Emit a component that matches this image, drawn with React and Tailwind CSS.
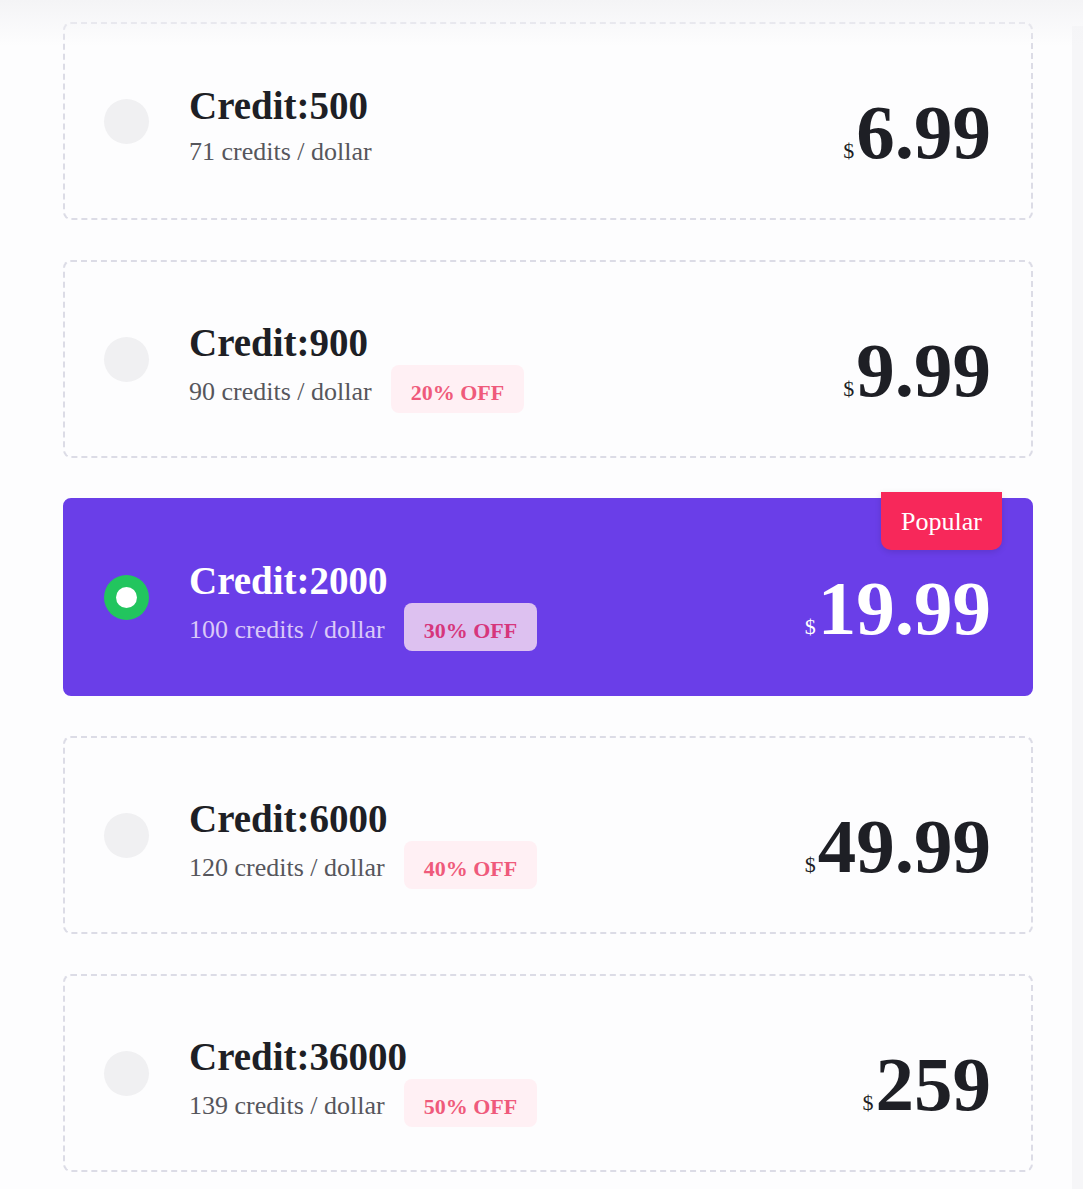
import React, { useState } from 'react'

const plans = [
  { credits: 500, rate: 71, price: '6.99' },
  { credits: 900, rate: 90, price: '9.99', off: '20% OFF' },
  { credits: 2000, rate: 100, price: '19.99', off: '30% OFF', popular: true },
  { credits: 6000, rate: 120, price: '49.99', off: '40% OFF' },
  { credits: 36000, rate: 139, price: '259', off: '50% OFF' },
]

function PlanCard({ plan, selected, onSelect }) {
  return (
    <div
      onClick={onSelect}
      className={`relative flex h-[198px] w-[970px] cursor-pointer items-center rounded-[8px] border-2 pl-[39px] pr-[40px] ${
        selected
          ? 'border-[#6a3ee8] bg-[#6a3ee8]'
          : 'border-dashed border-[#dcdce6] bg-[#fdfdfe]'
      }`}
    >
      {plan.popular && (
        <div className="absolute -top-[8px] right-[29px] flex h-[58px] w-[121px] items-center justify-center rounded-b-[10px] bg-[#f7285a] pt-[2px] text-[26px] leading-none text-white shadow-[0_2px_6px_rgba(0,0,0,0.12)]">
          Popular
        </div>
      )}

      {selected ? (
        <div className="flex h-[45px] w-[45px] shrink-0 items-center justify-center rounded-full bg-[#22c55e]">
          <div className="h-[21px] w-[21px] rounded-full bg-white" />
        </div>
      ) : (
        <div className="h-[45px] w-[45px] shrink-0 rounded-full bg-[#f0f0f2]" />
      )}

      <div className="ml-[40px] flex flex-col pt-[21px]">
        <div
          className={`text-[39px] font-bold leading-[38px] ${
            selected ? 'text-white' : 'text-[#1e1f25]'
          }`}
        >
          Credit:{plan.credits}
        </div>
        <div className="mt-[3px] flex items-baseline gap-[19px]">
          <span
            className={`text-[26px] leading-[48px] ${
              selected ? 'text-[#dac9f8]' : 'text-[#56565c]'
            }`}
          >
            {plan.rate} credits / dollar
          </span>
          {plan.off && (
            <span
              className={`rounded-[8px] px-[20px] pb-[8px] pt-[16px] text-[22px] font-bold leading-[24px] ${
                selected
                  ? 'bg-[#ddc1f0] text-[#d6367c]'
                  : 'bg-[#fff0f4] text-[#ef5a7b]'
              }`}
            >
              {plan.off}
            </span>
          )}
        </div>
      </div>

      <div
        className={`ml-auto mt-[23px] flex items-baseline leading-none ${
          selected ? 'text-white' : 'text-[#1e1f25]'
        }`}
      >
        <span className="mr-[2px] text-[22px]">$</span>
        <span className="text-[77px] font-bold">{plan.price}</span>
      </div>
    </div>
  )
}

export default function App() {
  const [selected, setSelected] = useState(2)

  return (
    <div
      className="relative flex min-h-[1189px] w-full bg-[#fdfdfe]"
      style={{ fontFamily: '"Liberation Serif", "Times New Roman", serif' }}
    >
      <div className="pointer-events-none absolute left-0 right-0 top-0 z-10 h-[46px] bg-gradient-to-b from-[#f4f4f6] to-[#f4f4f6]/0" />

      <div className="flex flex-1 flex-col gap-[40px] pb-[18px] pl-[63px] pt-[22px]">
        {plans.map((plan, i) => (
          <PlanCard
            key={plan.credits}
            plan={plan}
            selected={selected === i}
            onSelect={() => setSelected(i)}
          />
        ))}
      </div>

      <div className="mt-[26px] w-[11px] shrink-0 bg-[#f6f6f8]" />
    </div>
  )
}
